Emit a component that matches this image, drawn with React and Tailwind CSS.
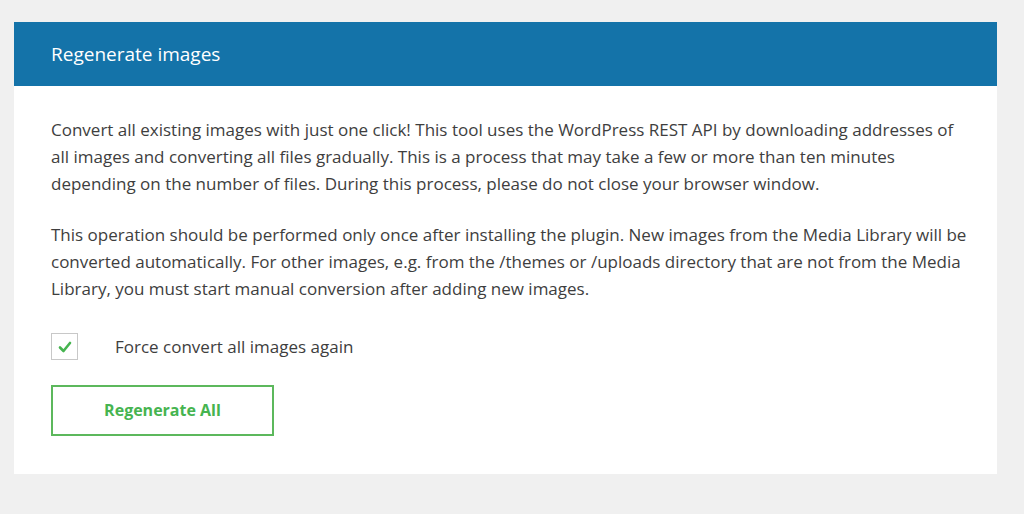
import React from "react";

export default function App() {
  return (
    <div className="min-h-[514px] w-full bg-[#f0f0f0] pt-[22px] pl-[14px] pr-[27px] pb-[40px]" style={{ fontFamily: '"Open Sans", "Noto Sans", sans-serif' }}>
      <div className="bg-white w-[983px]">
        <div className="h-[64px] bg-[#1473a9] flex items-center px-[37px]">
          <h2 className="text-white text-[19px] font-normal">Regenerate images</h2>
        </div>
        <div className="px-[37px] pt-[30px] pb-[38px] text-[#3e3e3e] text-[17px] leading-[27px]">
          <p className="whitespace-nowrap">
            Convert all existing images with just one click! This tool uses the WordPress REST API by downloading addresses of
            <br />
            all images and converting all files gradually. This is a process that may take a few or more than ten minutes
            <br />
            depending on the number of files. During this process, please do not close your browser window.
          </p>
          <p className="mt-[24px] whitespace-nowrap">
            This operation should be performed only once after installing the plugin. New images from the Media Library will be
            <br />
            converted automatically. For other images, e.g. from the /themes or /uploads directory that are not from the Media
            <br />
            Library, you must start manual conversion after adding new images.
          </p>
          <label className="mt-[31px] flex items-center gap-[37px]">
            <span className="w-[27px] h-[27px] border border-[#c8c8c8] flex items-center justify-center bg-white">
              <svg width="14" height="12" viewBox="0 0 14 12" fill="none">
                <path d="M2 6.5 L5.5 10 L12 2" stroke="#46b450" strokeWidth="2.6" strokeLinecap="round" strokeLinejoin="round" />
              </svg>
            </span>
            <span>Force convert all images again</span>
          </label>
          <button className="mt-[25px] w-[223px] h-[51px] border-2 border-[#5cb85c] text-[#46b450] font-bold text-[16px] flex items-center justify-center">
            Regenerate All
          </button>
        </div>
      </div>
    </div>
  );
}
